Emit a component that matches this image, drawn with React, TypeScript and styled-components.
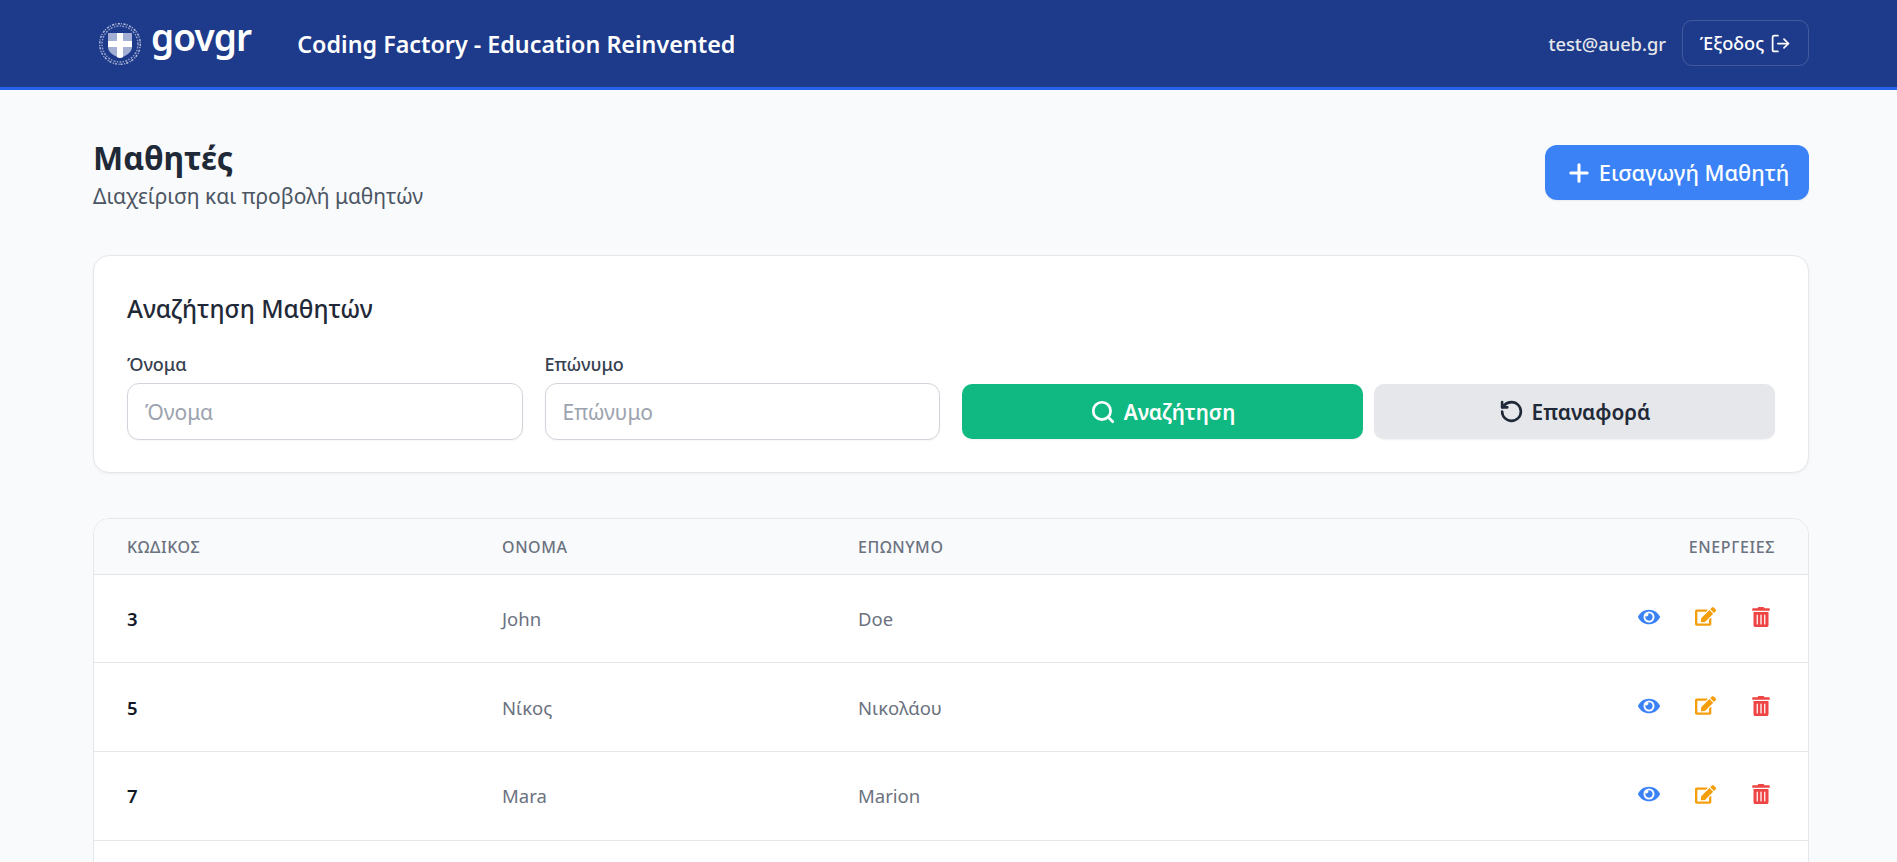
import React from "react";
import styled, { createGlobalStyle } from "styled-components";
import { FaEye, FaEdit, FaTrashAlt } from "react-icons/fa";
import { Search, RotateCcw, LogOut, Plus } from "lucide-react";

const Global = createGlobalStyle`
  html, body { margin: 0; padding: 0; height: 862px; overflow: hidden; background: #f9fafb; }
  body { font-family: "Noto Sans", "Open Sans", sans-serif; color: #1f2937; }
  * { box-sizing: border-box; }
`;

const Header = styled.header`
  height: 90px;
  background: #1e3a8a;
  border-bottom: 3px solid #2563eb;
  padding: 0 88px 0 98px;
  display: flex;
  align-items: center;
  justify-content: space-between;
`;
const Brand = styled.div`
  display: flex;
  align-items: center;
`;
const LogoText = styled.span`
  font-family: "Noto Sans", sans-serif;
  font-weight: 600;
  font-size: 37px;
  line-height: 40px;
  letter-spacing: -0.9px;
  color: #fff;
  margin: -13px 0 0 9px;
`;
const AppName = styled.span`
  font-size: 23.3px;
  font-weight: 600;
  color: #fff;
  margin-left: 46px;
`;
const UserArea = styled.div`
  display: flex;
  align-items: center;
  gap: 16px;
  margin-top: -1px;
`;
const Email = styled.span`
  font-size: 18.3px;
  font-weight: 500;
  color: #e5e7eb;
`;
const LogoutButton = styled.button`
  height: 46px;
  width: 127px;
  display: inline-flex;
  align-items: center;
  justify-content: center;
  gap: 6px;
  background: transparent;
  border: 1px solid rgba(255, 255, 255, 0.16);
  border-radius: 10px;
  color: #fff;
  font: 500 18.2px "Noto Sans", sans-serif;
`;
const Main = styled.main`
  padding: 50px 88px 0 93px;
`;
const TitleRow = styled.div`
  display: flex;
  justify-content: space-between;
  align-items: flex-start;
  margin-bottom: 43px;
`;
const Title = styled.h1`
  margin: 0;
  font-size: 32px;
  line-height: 36px;
  font-weight: 700;
  color: #1f2937;
`;
const Subtitle = styled.p`
  margin: 5px 0 0;
  font-size: 21px;
  line-height: 31px;
  color: #4b5563;
`;
const AddButton = styled.button`
  height: 55px;
  width: 264px;
  margin-top: 5px;
  display: inline-flex;
  align-items: center;
  justify-content: center;
  gap: 6px;
  background: #3b82f6;
  color: #fff;
  border: 0;
  border-radius: 12px;
  font: 500 21.8px "Noto Sans", sans-serif;
  box-shadow: 0 1px 2px rgba(0, 0, 0, 0.06);
`;
const Card = styled.section`
  height: 218px;
  background: #fff;
  border: 1px solid #e5e7eb;
  border-radius: 16px;
  padding: 33px;
  box-shadow: 0 1px 3px rgba(0, 0, 0, 0.05);
  margin-bottom: 45px;
`;
const CardTitle = styled.h2`
  margin: 0 0 23px;
  font-size: 24.4px;
  line-height: 40px;
  font-weight: 500;
  color: #1f2937;
`;
const SearchGrid = styled.div`
  display: grid;
  grid-template-columns: repeat(4, 1fr);
  column-gap: 22px;
  align-items: end;
`;
const Field = styled.label`
  display: flex;
  flex-direction: column;
  gap: 7px;
  font-size: 18px;
  line-height: 24px;
  font-weight: 500;
  color: #374151;
`;
const TextInput = styled.input`
  height: 57px;
  width: 100%;
  padding: 0 17px;
  background: #fff;
  border: 1px solid #d1d5db;
  border-radius: 12px;
  font: 400 21px "Noto Sans", sans-serif;
  box-shadow: 0 1px 2px rgba(0, 0, 0, 0.04);
  &::placeholder { color: #9ca3af; }
`;
const Actions = styled.div`
  grid-column: span 2;
  display: flex;
  gap: 11px;
`;
const ActionButton = styled.button<{ $primary?: boolean }>`
  flex: 1;
  height: 55px;
  margin-bottom: 1px;
  display: inline-flex;
  align-items: center;
  justify-content: center;
  gap: 8px;
  border: 0;
  border-radius: 10px;
  font: 600 20.8px "Noto Sans", sans-serif;
  background: ${(p) => (p.$primary ? "#10b981" : "#e5e7eb")};
  color: ${(p) => (p.$primary ? "#fff" : "#1f2937")};
  box-shadow: 0 1px 2px rgba(0, 0, 0, 0.06);
`;
const TableWrap = styled.div`
  background: #fff;
  border: 1px solid #e5e7eb;
  border-radius: 16px;
  overflow: hidden;
`;
const Table = styled.table`
  width: 100%;
  table-layout: fixed;
  border-collapse: collapse;
`;
const Th = styled.th<{ $width?: number; $right?: boolean }>`
  width: ${(p) => (p.$width ? `${p.$width}px` : "auto")};
  height: 55px;
  padding: 2px 33px 0;
  background: #f9fafb;
  border-bottom: 1px solid #e5e7eb;
  text-align: ${(p) => (p.$right ? "right" : "left")};
  font-size: 16px;
  font-weight: 500;
  letter-spacing: 0.6px;
  color: #6b7280;
`;
const Td = styled.td<{ $strong?: boolean; $right?: boolean }>`
  height: 88.75px;
  padding: 0 33px;
  border-bottom: 1px solid #e5e7eb;
  font-size: 18.5px;
  font-weight: ${(p) => (p.$strong ? 600 : 400)};
  color: ${(p) => (p.$strong ? "#111827" : "#6b7280")};
  text-align: ${(p) => (p.$right ? "right" : "left")};
`;
const IconRow = styled.div`
  display: flex;
  justify-content: flex-end;
  align-items: center;
  gap: 35px;
  padding-right: 4px;
  margin-top: -3px;
`;
const IconButton = styled.button<{ $color: string }>`
  padding: 0;
  border: 0;
  background: none;
  display: inline-flex;
  color: ${(p) => p.$color};
`;

const Seal = () => (
  <svg width="44" height="44" viewBox="0 0 44 44" aria-hidden="true">
    <circle cx="22" cy="22" r="20.300" fill="none" stroke="#aeb9d8" strokeWidth="1.500" strokeDasharray="2.200 1 1 1.600" />
    <circle cx="22" cy="22" r="18" fill="none" stroke="#8d9dc8" strokeWidth="1.500" strokeDasharray="1.400 1.200 2 1.400" />
    <path d="M10 11h24v14c0 5-5 8.500-12 11-7-2.500-12-6-12-11z" fill="#a3b0d4" />
    <path d="M19 11h6v8h9v6h-9v10.300l-3 .7-3-.7V25H10v-6h9z" fill="#fff" />
  </svg>
);

const students = [
  { id: "3", first: "John", last: "Doe" },
  { id: "5", first: "Νίκος", last: "Νικολάου" },
  { id: "7", first: "Mara", last: "Marion" },
];

export default function App() {
  return (
    <>
      <Global />
      <Header>
        <Brand>
          <Seal />
          <LogoText>govgr</LogoText>
          <AppName>Coding Factory - Education Reinvented</AppName>
        </Brand>
        <UserArea>
          <Email>test@aueb.gr</Email>
          <LogoutButton>
            Έξοδος <LogOut size={21} strokeWidth={2} />
          </LogoutButton>
        </UserArea>
      </Header>
      <Main>
        <TitleRow>
          <div>
            <Title>Μαθητές</Title>
            <Subtitle>Διαχείριση και προβολή μαθητών</Subtitle>
          </div>
          <AddButton>
            <Plus size={28} strokeWidth={2.6} /> Εισαγωγή Μαθητή
          </AddButton>
        </TitleRow>
        <Card>
          <CardTitle>Αναζήτηση Μαθητών</CardTitle>
          <SearchGrid>
            <Field>
              Όνομα
              <TextInput placeholder="Όνομα" />
            </Field>
            <Field>
              Επώνυμο
              <TextInput placeholder="Επώνυμο" />
            </Field>
            <Actions>
              <ActionButton $primary>
                <Search size={26} strokeWidth={2.5} /> Αναζήτηση
              </ActionButton>
              <ActionButton>
                <RotateCcw size={25} strokeWidth={2.5} /> Επαναφορά
              </ActionButton>
            </Actions>
          </SearchGrid>
        </Card>
        <TableWrap>
          <Table>
            <thead>
              <tr>
                <Th $width={375}>ΚΩΔΙΚΟΣ</Th>
                <Th $width={356}>ΟΝΟΜΑ</Th>
                <Th>ΕΠΩΝΥΜΟ</Th>
                <Th $width={300} $right>ΕΝΕΡΓΕΙΕΣ</Th>
              </tr>
            </thead>
            <tbody>
              {students.map((s) => (
                <tr key={s.id}>
                  <Td $strong>{s.id}</Td>
                  <Td>{s.first}</Td>
                  <Td>{s.last}</Td>
                  <Td $right>
                    <IconRow>
                      <IconButton $color="#3b82f6"><FaEye size={22} /></IconButton>
                      <IconButton $color="#f59e0b"><FaEdit size={21} /></IconButton>
                      <IconButton $color="#ef4444"><FaTrashAlt size={20} /></IconButton>
                    </IconRow>
                  </Td>
                </tr>
              ))}
              <tr>
                <Td />
                <Td />
                <Td />
                <Td />
              </tr>
            </tbody>
          </Table>
        </TableWrap>
      </Main>
    </>
  );
}
